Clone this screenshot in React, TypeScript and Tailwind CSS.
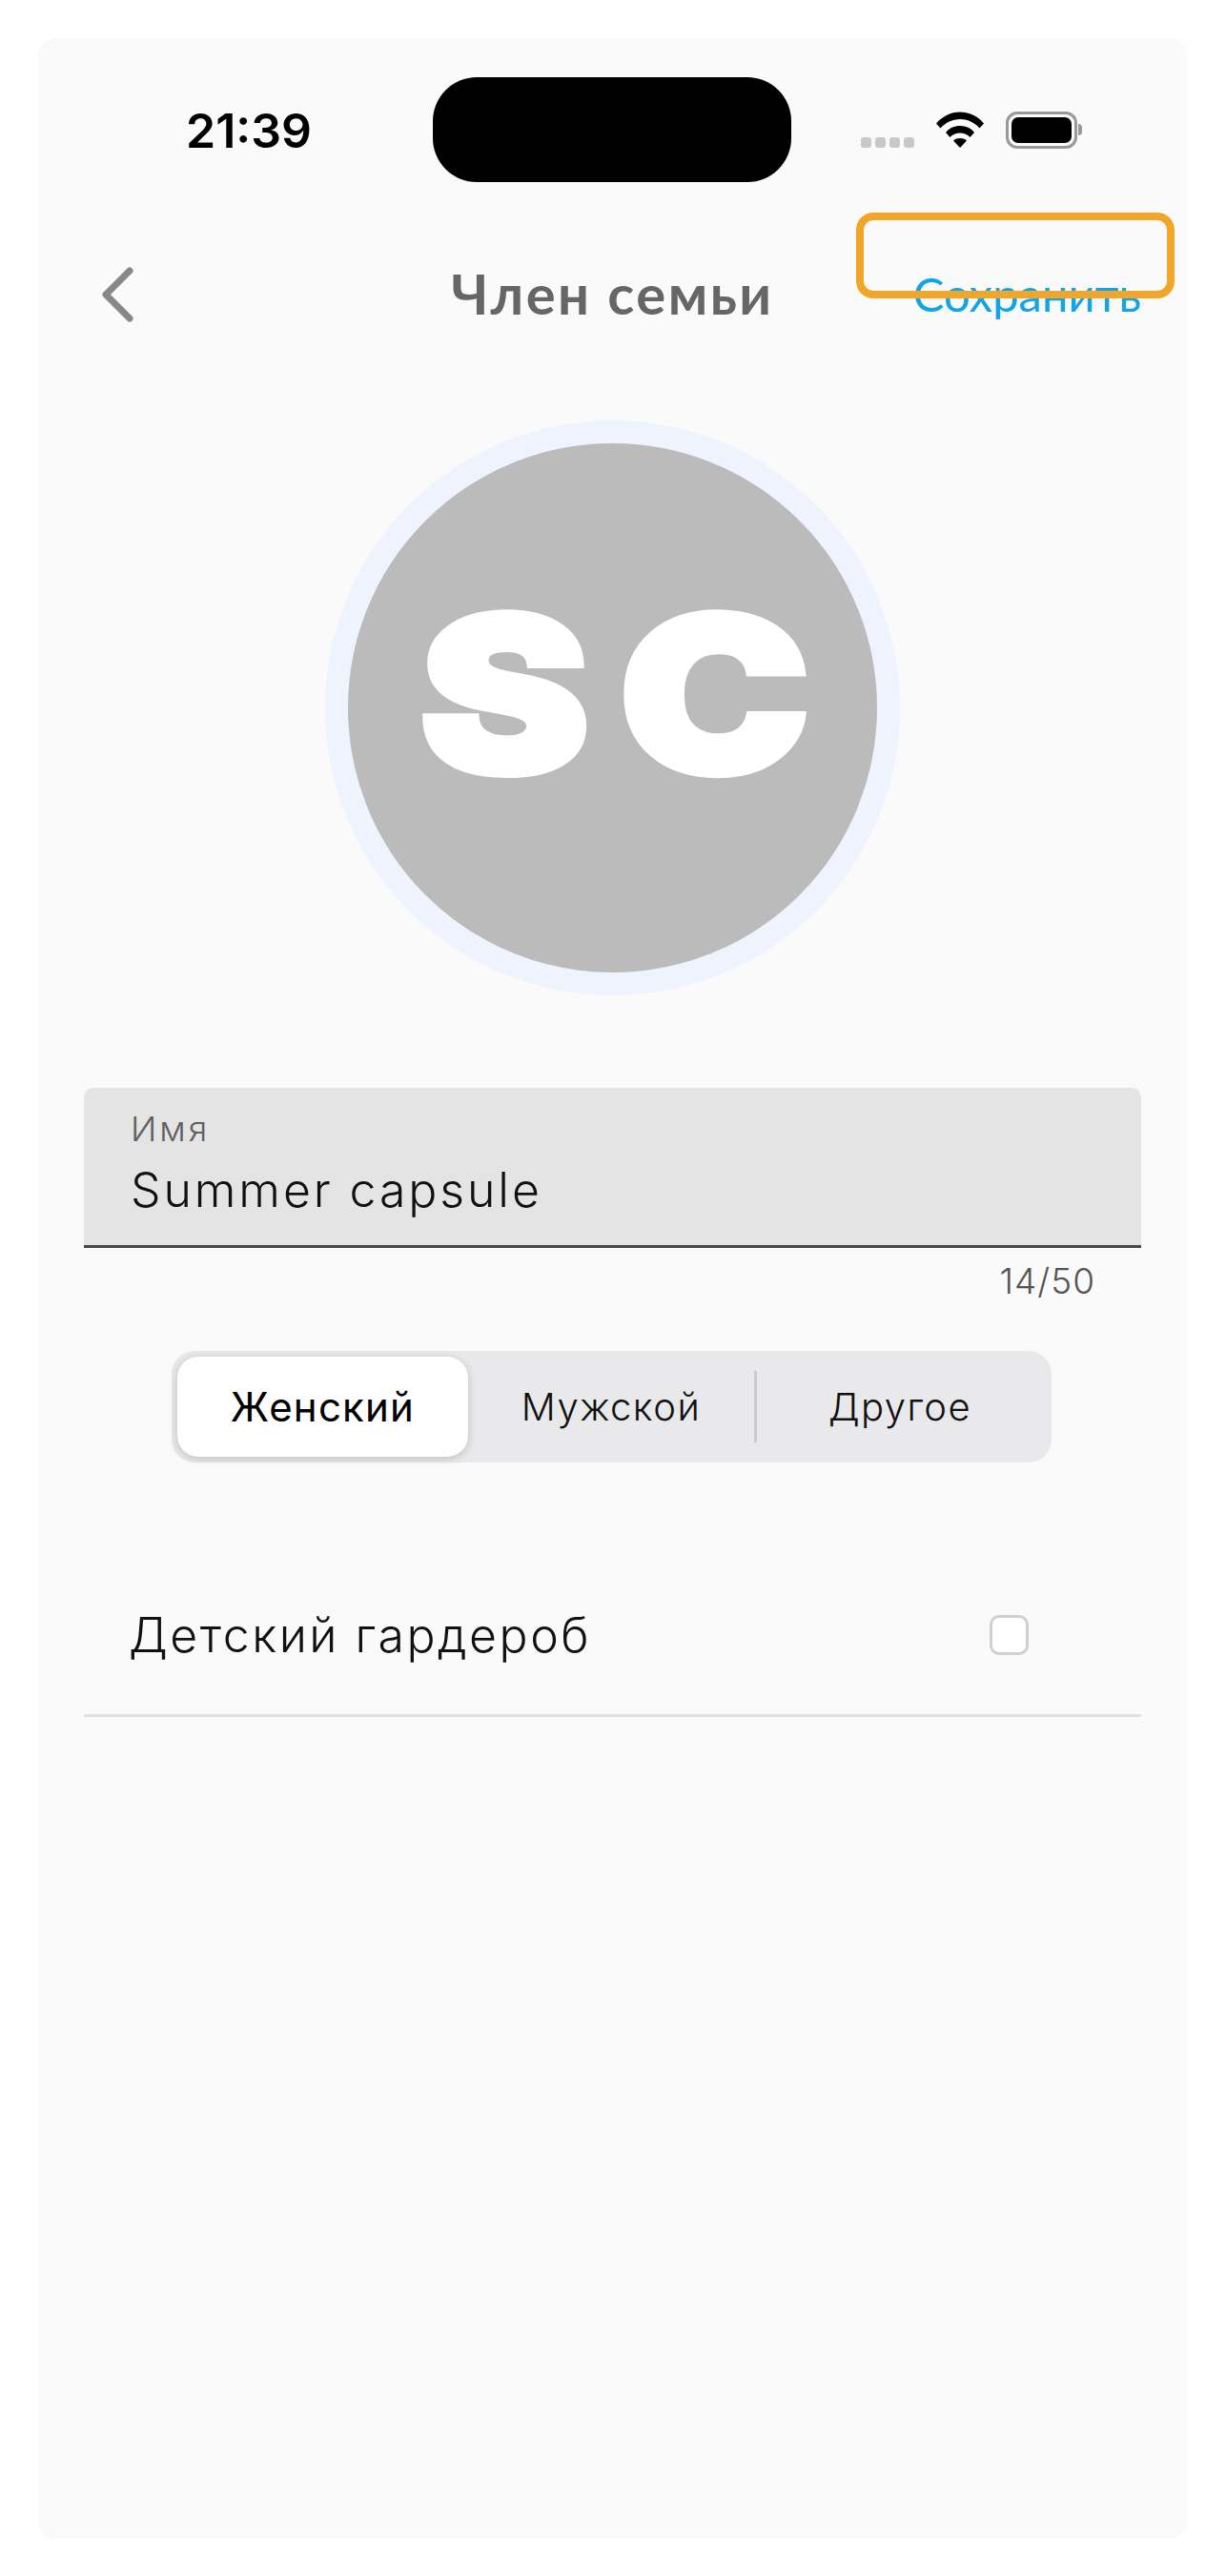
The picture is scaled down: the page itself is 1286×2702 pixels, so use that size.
function Wifi() {
  return (
    <svg width="50" height="38" viewBox="0 0 50 38" fill="#000">
      <path d="M0 12.5C6.5 5 15.5 0.5 25 0.5S43.500 5 50 12.500L45.500 17.500C40 11.500 33 8 25 8S10 11.500 4.500 17.500Z" />
      <path d="M10 22C13.500 17.500 19 15 25 15S36.500 17.500 40 22L35.500 27C33 24 29.200 22.500 25 22.500S17 24 14.500 27Z" />
      <path d="M18 30.500C19.500 28.800 22 28 25 28S30.500 28.800 32 30.500L25 38Z" />
    </svg>
  );
}

function Battery() {
  return (
    <div className="flex items-center">
      <div className="w-[75px] h-[39px] rounded-[12px] border-[3px] border-[#999999] p-[3px]">
        <div className="w-full h-full rounded-[7px] bg-black" />
      </div>
      <div className="w-[4px] h-[12px] ml-[1px] rounded-r-full bg-[#999999]" />
    </div>
  );
}

export default function App() {
  return (
    <div className="w-[1286px] h-[2702px] bg-white pt-[40px] pl-[40px] font-['Inter',sans-serif]">
      <div className="relative w-[1205px] h-[2623px] bg-[#fafafa] rounded-[18px] pt-[41px]">
        {/* Status bar */}
        <div className="flex items-center h-[110px]">
          <span className="w-[414px] pl-[155px] pt-[2px] text-[50px] leading-none font-semibold text-black whitespace-nowrap">
            21:39
          </span>
          <div className="w-[376px] h-[110px] rounded-[46px] bg-black" />
          <div className="flex items-center ml-[73px] h-[40px]">
            <div className="flex gap-[4px] items-end self-end pb-[1px] mr-[23px]">
              <div className="w-[11px] h-[11px] rounded-[3px] bg-[#c8c8c8]" />
              <div className="w-[11px] h-[11px] rounded-[3px] bg-[#c8c8c8]" />
              <div className="w-[11px] h-[11px] rounded-[3px] bg-[#c8c8c8]" />
              <div className="w-[11px] h-[11px] rounded-[3px] bg-[#c8c8c8]" />
            </div>
            <Wifi />
            <div className="ml-[23px]">
              <Battery />
            </div>
          </div>
        </div>

        {/* Nav */}
        <div className="flex items-center justify-between h-[100px] mt-[68px] pl-[67px] pr-[48px]">
          <div className="w-[168px]">
            <svg width="33" height="58" viewBox="0 0 33 58" fill="none" stroke="#888888" strokeWidth="7" strokeLinecap="round" strokeLinejoin="round">
              <path d="M29 4L4 29L29 54" />
            </svg>
          </div>
          <h1 className="font-['Lato',sans-serif] text-[58px] font-bold text-[#666666] leading-none whitespace-nowrap tracking-[2.5px] pb-[3px]">Член семьи</h1>
          <div className="w-[187px] flex justify-end font-['Lato',sans-serif] text-[49px] leading-none text-[#10a5e8] whitespace-nowrap pb-[2px]">Сохранить</div>
        </div>

        {/* Avatar */}
        <div className="flex justify-center mt-[82px]">
          <div className="w-[603px] h-[603px] rounded-full bg-[#bbbbbb] border-[24px] border-[#eef3fe] flex justify-center pt-[154px] pl-[36px]">
            <span className="font-['Inter',sans-serif] font-black text-[226px] leading-[218px] h-[218px] text-white tracking-[27px] scale-x-[1.18] [-webkit-text-stroke:8px_white]">SC</span>
          </div>
        </div>

        {/* Name field */}
        <div className="mt-[97px] mx-[48px] h-[168px] rounded-t-[10px] bg-[#e4e4e4] border-b-[3px] border-[#4a4750] pl-[49px] pt-[21px]">
          <div className="text-[36px] leading-[44px] font-light text-[#5f5f66] tracking-[3px]">Имя</div>
          <div className="text-[50px] leading-[56px] mt-[14px] font-light text-[#111111] tracking-[2.9px]">Summer capsule</div>
        </div>
        <div className="h-[108px] mr-[96px] pt-[12px] text-right text-[37px] leading-[46px] font-light text-[#555555] tracking-[1px]">14/50</div>

        {/* Gender segment */}
        <div className="ml-[140px] w-[923px] h-[117px] rounded-[24px] bg-[#e9e9eb] p-[6px] flex items-center">
          <div className="w-[305px] h-[105px] rounded-[22px] bg-white shadow-[0_2px_10px_rgba(0,0,0,0.18)] flex items-center justify-center text-[42px] font-normal text-black tracking-[1.2px]">Женский</div>
          <div className="w-[300px] text-center text-[40px] font-light text-[#111111] tracking-[1.5px]">Мужской</div>
          <div className="w-[3px] h-[75px] bg-[#cccccc]" />
          <div className="flex-1 text-center text-[40px] font-light text-[#111111] tracking-[1.4px] pr-[3px]">Другое</div>
        </div>

        {/* Kids row */}
        <div className="mt-[102px] mx-[48px] h-[165px] border-b-[3px] border-[#e2e2e2] flex items-center justify-between pl-[47px] pr-[118px]">
          <span className="text-[50px] font-light text-[#111111] tracking-[2.5px] whitespace-nowrap pb-[4px]">Детский гардероб</span>
          <div className="w-[41px] h-[42px] rounded-[10px] border-[3px] border-[#d0d0d0] bg-white mb-[4px]" />
        </div>

        {/* Highlight */}
        <div className="absolute left-[858px] top-[183px] w-[334px] h-[90px] rounded-[18px] border-[8px] border-[#f2a629]" />
      </div>
    </div>
  );
}
